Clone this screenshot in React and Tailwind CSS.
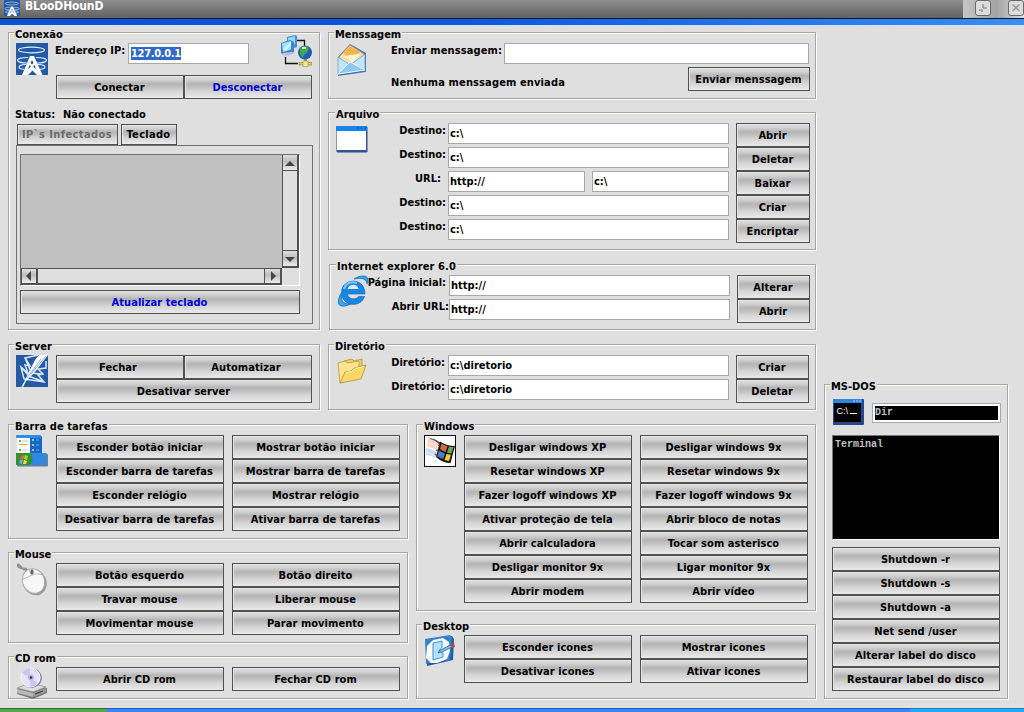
import React from "react";

function Group({ title, className = "", titleClass = "ml-[5px]", children }) {
  return (
    <section
      className={
        "box-border border border-[#a6a69f] shadow-[inset_1px_1px_0_#fff,1px_1px_0_#fff] " + className
      }
    >
      <h2 className={"-mt-[5px] h-[12px] w-fit bg-[#dfdfdf] px-px leading-[13px] " + titleClass}>{title}</h2>
      {children}
    </section>
  );
}

function Btn({ className = "w-[168px]", children }) {
  return (
    <button
      className={
        "box-border flex h-[24px] shrink-0 items-center justify-center border border-[#505050] bg-[linear-gradient(to_bottom,#dedede_0%,#d2d2d2_16%,#b4b4b4_36%,#bcbcbc_46%,#d2d2d2_66%,#eaeaea_100%)] pr-px leading-[13px] tracking-[0.06px] whitespace-nowrap shadow-[inset_1px_1px_0_#e6e6e6] " +
        className
      }
    >
      {children}
    </button>
  );
}

function Field({ className = "w-[281px]", children }) {
  return (
    <div
      className={
        "box-border flex h-[21px] shrink-0 items-center border border-[#a8a8a8] bg-white pl-[1px] leading-[13px] whitespace-nowrap " +
        className
      }
    >
      {children}
    </div>
  );
}

function Pairs({ rows }) {
  return (
    <div className="grid grid-cols-[168px_168px] gap-x-2">
      {rows.map(([a, b]) => (
        <React.Fragment key={a}>
          <Btn>{a}</Btn>
          <Btn>{b}</Btn>
        </React.Fragment>
      ))}
    </div>
  );
}

function IconRow({ icon, children }) {
  return (
    <div className="flex gap-2 pt-[3px] pl-[7px]">
      <div className="h-8 w-8 shrink-0">{icon}</div>
      {children}
    </div>
  );
}

function Label({ className = "", children }) {
  return <span className={"leading-[13px] whitespace-nowrap " + className}>{children}</span>;
}

function FieldRow({ label, children, labelClass = "w-[71px] pr-[2px]" }) {
  return (
    <div className="flex h-[24px]">
      <Label className={"flex shrink-0 justify-end pt-px " + labelClass}>{label}</Label>
      {children}
    </div>
  );
}

const Tower = ({ s = 32 }) => (
  <svg width={s} height={s} viewBox="0 0 32 32" className="block">
    <rect width="32" height="32" fill="#245aa5" />
    <g fill="none" stroke="#dceaff" strokeWidth="1.2">
      <ellipse cx="15.5" cy="7" rx="13" ry="2.8" />
      <path d="M12 14.500C5 14.500 1 16 1.500 17.500S7 20 11 20M20 14.500c7 0 11 1.500 10.500 3S25 20 21 20M10 21.500c-5 0-7 1.500-7 2.500s2 2 5 2.300M22 21.500c5 0 7 1.500 7 2.500s-2 2-5 2.300" />
    </g>
    <path d="M14 13h4l8.500 19h-5.500l-4.500-4.500L12 32H6z" fill="#fff" />
    <path d="M16 17l1.500 3-1.500 1.500-1.500-1.500zM13.500 22l1.500 1.500-3 3zM18.500 22l-1.500 1.500 3 3z" fill="#245aa5" />
  </svg>
);

const Network = () => (
  <svg width="32" height="32" viewBox="0 0 32 32" className="block">
    <path d="M17 5.500h7.500V11M5.500 22v6.500H18" fill="none" stroke="#111" strokeWidth="1.300" />
    <path d="M7 2l8-2 2 1v11l-8 3-2-1z" fill="#4a8ad6" />
    <path d="M8 3l7-2v8l-7 3z" fill="#8ddcfb" />
    <path d="M1 8l9-3 4 2v10l-9 3-4-2z" fill="#4680cf" />
    <path d="M2 8.500l9-2.500v8.500L3 17z" fill="#9fe6ff" />
    <path d="M3 14l8-7v3l-6 6z" fill="#d2f5ff" />
    <path d="M3 18l8-1 4 1-7 3-6-1z" fill="#b9c2e2" />
    <circle cx="25" cy="17.500" r="7" fill="#2459bd" />
    <path d="M20 13q3-3 7-2l2 3-2 4-3 2-1 3-3-4z" fill="#3cab45" />
    <path d="M22 13l4 0" stroke="#b7f3c6" strokeWidth="2" />
    <path d="M24 24h3v3h-3z" fill="#8f8d55" />
    <path d="M19 27.500h13v2.500H19z" fill="#d9cc6a" stroke="#857c45" strokeWidth=".6" />
    <path d="M23 26h5v5.500h-5z" fill="#f5e88e" stroke="#a3934b" strokeWidth=".6" />
  </svg>
);

const Mail = () => (
  <svg width="32" height="34" viewBox="0 0 32 34" className="block">
    <path d="M2 14L14 1l16 9v19L2 33z" fill="#4876b4" />
    <path d="M3 14L14 2l14 9-4 13H6z" fill="#f7dfa8" stroke="#b29164" strokeWidth=".7" />
    <path d="M8 9l6-6 10 6-3 3-12 1z" fill="#f9b647" />
    <path d="M7 13l17-2-7 8z" fill="#fff5df" />
    <path d="M2 14l12 8 15-11v16L2 31z" fill="#c0e5fb" stroke="#6b95c6" strokeWidth=".7" />
    <path d="M2 31l12-12 15 8z" fill="#8fc7f2" stroke="#e7f8ff" />
  </svg>
);

const AppWindow = () => (
  <svg width="32" height="27" viewBox="0 0 32 27" className="block">
    <rect x=".5" y=".5" width="31" height="26" rx="1" fill="#33558f" />
    <rect width="31" height="5" fill="#1684ee" />
    <path d="M21 2h2M24.500 2h2M28 2h2" stroke="#0c50a8" />
    <rect x="1" y="5" width="29" height="19" fill="#fff" />
  </svg>
);

const Explorer = () => (
  <svg width="32" height="32" viewBox="0 0 32 32" className="block">
    <path d="M28 19H10.500c1 6 9 6 11 2.500h6C24 33 5 32 4.500 18 4 3 28 1 28 19z" fill="#1686e1" stroke="#0d60ba" strokeWidth=".6" />
    <path d="M10.500 14h11c-1-6-10-5-11 0z" fill="#dfeaf5" />
    <path d="M7 14c2-6 7-8 13-6" fill="none" stroke="#75d0ff" strokeWidth="2" />
    <path d="M17 4c9-5 16-4 13 5 0-5-4-7-13-5zM5 17c-6 10-5 18 9 12-8 1-11-2-9-12z" fill="#3aa8f2" stroke="#2583cc" strokeWidth="1.200" />
  </svg>
);

const Folder = () => (
  <svg width="32" height="28" viewBox="0 0 32 28" className="block">
    <path d="M8 4l8-2 2 2 8-2v16H9z" fill="#f3ce5c" stroke="#aa8d3c" strokeWidth=".8" />
    <path d="M2 6l7-2 3 2 11-2v16L4 26z" fill="#ffe58d" stroke="#b69745" strokeWidth=".8" />
    <path d="M4 26l5-11 6-1 3-3 12-3-5 14z" fill="#fbd764" stroke="#b3923e" strokeWidth=".8" />
    <path d="M10 15.500l6-1 3-3 9-2" fill="none" stroke="#fff6bf" />
  </svg>
);

const ServerIcon = () => (
  <svg width="32" height="32" viewBox="0 0 32 32" className="block">
    <rect width="32" height="32" fill="#245aa5" />
    <path d="M22 0L9 3l5 8-5-1 3 8-7-6 3 12M9 3l6 14M5 12l8 9M8 24l20 3-6-7 5-1-5-5 8-1 0-7M12 21l14 5M14 18l12 1" fill="none" stroke="#d9e8ff" strokeWidth="1.500" />
    <path d="M5.500 32L10 23 19 5l4-5h9L19 17l-9 9-3 6z" fill="#fff" />
    <path d="M11 23L25 4M15 19L30 1" stroke="#7f9fd0" strokeWidth=".9" />
  </svg>
);

const Taskbar = () => (
  <svg width="32" height="32" viewBox="0 0 32 32" className="block">
    <rect x="1" y="1" width="25" height="18" rx="1" fill="#1767c5" />
    <rect x="0" y="0" width="25" height="3" rx="1" fill="#2f8be8" />
    <rect x="1" y="3" width="13" height="15" fill="#fff" />
    <path d="M3 5h2v2H3zM3 14h2v2H3z" fill="#67a844" />
    <path d="M3 9h9v1H3z" fill="#efb334" />
    <path d="M6 6h6M6 15h5" stroke="#b8c6dd" />
    <path d="M16 5h2M16 10h2M16 15h2" stroke="#8ec8ff" strokeWidth="2" />
    <path d="M20 5h3M20 10h3M20 15h3" stroke="#69aef4" />
    <rect x="1" y="19" width="31" height="12.500" rx="1" fill="#6a7f98" />
    <rect y="18" width="30.500" height="12" fill="#3188de" />
    <path d="M0 18h14q5 6 0 12H0z" fill="#34912e" />
    <path d="M5 21l3-1v4l-4 1z" fill="#e9623b" />
    <path d="M9 20l3 1-1 4-3-1z" fill="#9ddb44" />
    <path d="M4 25l3 0-1 4-3-1z" fill="#67abf1" />
    <path d="M8 25l3 1-1 3-3 0z" fill="#f5da4b" />
  </svg>
);

const MouseIcon = () => (
  <svg width="32" height="34" viewBox="0 0 32 34" className="block">
    <path d="M15 8C11 6 8 8 6 5S1 0 2 3s5 2 9 3" fill="none" stroke="#8e8e8e" strokeWidth="2" />
    <ellipse cx="19" cy="19.500" rx="11.500" ry="13" transform="rotate(-24 19 19.500)" fill="#999" />
    <ellipse cx="17.500" cy="18" rx="11" ry="12.500" transform="rotate(-24 17.500 18)" fill="#f7f7f7" stroke="#aaa" />
    <path d="M7 16c4-1 6-3 9-4 4-2 8-1 10 0M15 11l-2-4" fill="none" stroke="#b8b8b8" />
    <ellipse cx="16" cy="9" rx="1.600" ry="2.800" fill="#596096" />
  </svg>
);

const Disc = () => (
  <svg width="32" height="32" viewBox="0 0 32 32" className="block">
    <path d="M1 22l13-5 17 4v5l-14 6-16-5z" fill="#777" />
    <path d="M1 21l13-5 16 4-13 5z" fill="#dedede" stroke="#888" strokeWidth=".7" />
    <path d="M1 22l16 4v4L1 26z" fill="#b8b8b8" />
    <path d="M17 26l13-5v4l-13 5z" fill="#999" />
    <path d="M19 27l8-3" stroke="#333" />
    <ellipse cx="15.500" cy="11" rx="10.500" ry="10" fill="#8989a8" />
    <circle cx="14.500" cy="10.500" r="9.500" fill="#e4e1fa" stroke="#fafaff" />
    <path d="M14 10L6 6q3-5 8-5zM15 11l7 6q-4 3-8 3z" fill="#cbc6f1" />
    <circle cx="15" cy="10.500" r="3" fill="#b7b6df" />
    <circle cx="15" cy="10.500" r="1.300" fill="#353553" />
  </svg>
);

const WindowsFlag = () => (
  <svg width="32" height="32" viewBox="0 0 32 32" className="block">
    <rect x=".5" y=".5" width="31" height="31" fill="#fff" stroke="#111" />
    <path d="M4 2q7 1 13 6l-3 9q-5-5-11-5z" fill="#f8d5c6" />
    <path d="M2 13q7 1 12 5l-2 5q-5-3-10-3z" fill="#ccd9f2" />
    <path d="M6 3q6 1 11 5l-1 2Q11 5 6 4z" fill="#555" />
    <path d="M16 6.500q7 4.500 15 4.500l-4.500 17q-8 0-14.500-6z" fill="#161616" />
    <path d="M17.500 8.500q3 2 6 2.500l-2 6q-3-1-5.500-3z" fill="#d3693f" />
    <path d="M25 11.500q2 .6 4.500.6l-2 6.300q-2.500 0-4.500-1z" fill="#67a84a" />
    <path d="M15 15.500q3 2 6 3l-2 5.500q-3-1-5.500-3z" fill="#4b80c9" />
    <path d="M22.500 19q2.500.8 4.500.8L25 26q-2.500-.3-4.500-1z" fill="#f5cd36" />
    <path d="M5 8l9 4M4 12l9 4M3 17l8 4" stroke="#fff" strokeDasharray="2 1" />
    <path d="M11 19l3 3M12 15l2 1M14 10l2 1" stroke="#555" strokeWidth="1.200" />
  </svg>
);

const DesktopIcon = () => (
  <svg width="32" height="32" viewBox="0 0 32 32" className="block">
    <path d="M2 5l26-4 2 3-1 21L3 31z" fill="#1f5d9f" />
    <path d="M1 4l25-4 2 2-2 23L2 29z" fill="#3681cb" />
    <path d="M9 5l10-2 6 4 1 9-3 8-10 4H7l-5-5 1-12z" fill="#f7fbf6" />
    <path d="M9 8l9-2v6l-3 4 4 2v4l-10 3z" fill="#b7e0fb" stroke="#3a93dc" />
    <path d="M15 16l11-6 2 2-10 5-4 1z" fill="#7ebce9" stroke="#286ba7" strokeWidth=".8" />
    <path d="M27 9l3-1 1 4-3 1z" fill="#c94435" />
  </svg>
);

const DosIcon = () => (
  <svg width="31" height="26" viewBox="0 0 31 26" className="block">
    <rect width="31" height="26" rx="1" fill="#28488d" />
    <rect width="29" height="4" fill="#2f86df" />
    <path d="M20 2h2M23 2h2M26 2h2" stroke="#9cd0ff" />
    <rect x="1" y="4" width="27" height="19" fill="#000" />
    <text x="3.500" y="15" fill="#fff" fontFamily="Liberation Sans" fontSize="9" fontWeight="400">C:\</text>
    <path d="M17 14.500h7" stroke="#fff" />
  </svg>
);

function Arrow({ d, className = "" }) {
  return (
    <div
      className={
        "box-border flex h-4 w-4 items-center justify-center border border-[#505050] bg-[linear-gradient(to_bottom,#dedede,#bdbdbd_45%,#ececec)] " +
        className
      }
    >
      <svg width="10" height="10" viewBox="0 0 10 10">
        <path d={d} fill="#444" />
      </svg>
    </div>
  );
}

function Keyboard() {
  return (
    <div className="mt-px ml-[7px] box-border h-[179px] w-[297px] border border-[#707070] pt-[8px] pl-[3px]">
      <div className="box-border flex h-[132px] w-[280px] flex-col border-t border-r border-b border-l border-t-[#707070] border-r-white border-b-white border-l-[#707070]">
        <div className="flex h-[113px]">
          <div className="w-[261px] bg-[#c0c0c0]" />
          <div className="box-border flex w-[17px] flex-col justify-between border-r-2 border-b-2 border-l border-[#505050]">
            <Arrow d="M5 3L10 8H0z" className="w-full border-x-0 border-t-0" />
            <Arrow d="M0 3h10L5 8z" className="w-full border-x-0 border-b-0" />
          </div>
        </div>
        <div className="box-border flex h-[17px] w-[261px] justify-between border-t border-r-2 border-b-2 border-l border-[#505050]">
          <Arrow d="M7 0v10L2 5z" className="h-full border-y-0 border-r-2 border-l-0" />
          <Arrow d="M3 0v10l5-5z" className="h-full border-y-0 border-r-0" />
        </div>
      </div>
      <Btn className="mt-[4px] w-[280px] text-[#0000d8]">Atualizar teclado</Btn>
    </div>
  );
}

export default function App() {
  return (
    <div className="flex h-[712px] w-[1024px] flex-col overflow-hidden bg-[#dfdfdf] font-['DejaVu_Sans_Condensed','DejaVu_Sans',sans-serif] text-[11px] font-bold text-black [font-stretch:condensed]">
      <header className="flex h-[18px] shrink-0 justify-between bg-[linear-gradient(to_bottom,#8d8d8d,#626262)]">
        <div className="flex pl-[4px]">
          <Tower s={16} />
          <span className="ml-[5px] text-[12px] leading-[13px] font-bold tracking-[-0.15px] text-white">BLooDHounD</span>
        </div>
        <div className="flex w-[61px] justify-between bg-[linear-gradient(to_right,#c5c5c5,#a3a3a3_55%,#dedede)] pl-[12px]">
          {["M8 4v4M8 8h4M4 10h3v2", "M4.500 4.500l7 6.500M11.500 4.500l-7 6.500"].map((d) => (
            <svg key={d} width="16" height="16" viewBox="0 0 16 16" className="block">
              <rect x=".5" y=".5" width="15" height="15" rx="2.500" fill="#dcdcdc" stroke="#686868" />
              <path d={d} fill="none" stroke="#989898" strokeWidth="1.600" />
            </svg>
          ))}
        </div>
      </header>
      <div className="h-[7px] shrink-0 border-t border-[#10182b] bg-[linear-gradient(to_right,#0b54d2,#0b58dc_45%,#3b8df8)]" />
      <div className="h-px shrink-0 bg-[#cfe6f2]" />

      <main className="flex h-[682px] shrink-0 gap-2 pt-[6px] pl-2">
        <div className="flex w-[808px] shrink-0 flex-col gap-[14px]">
          <div className="flex h-[378px] gap-2">
            <div className="flex w-[312px] flex-col gap-[14px]">
              <Group title="Conexão" className="h-[298px]">
                <div className="flex h-[59px] gap-2 pl-[7px]">
                  <div className="pt-[3px]">
                    <Tower />
                  </div>
                  <div className="flex w-[256px] flex-col">
                    <div className="flex h-[35px] items-start">
                      <Label className="-ml-px w-[73px] pt-[4px]">Endereço IP:</Label>
                      <Field className="mt-[3px] w-[121px]">
                        <span className="ml-px bg-[#316ac5] tracking-[-0.3px] text-white">127.0.0.1</span>
                      </Field>
                      <div className="-mt-[5px] ml-[31px]">
                        <Network />
                      </div>
                    </div>
                    <div className="flex">
                      <Btn className="w-[128px]">Conectar</Btn>
                      <Btn className="w-[128px] text-[#0000d8]">Desconectar</Btn>
                    </div>
                  </div>
                </div>
                <div className="flex h-[25px] pt-[9px] pl-[6px]">
                  <Label className="w-[48px]">Status:</Label>
                  <Label>Não conectado</Label>
                </div>
                <div className="flex h-[20px] gap-[3px] pl-[8px]">
                  <Btn className="h-[21px]! w-[101px] tracking-[0.4px]! text-[#6b6b6b]">IP`s Infectados</Btn>
                  <Btn className="h-[21px]! w-[56px] tracking-[0.3px]!">Teclado</Btn>
                </div>
                <Keyboard />
              </Group>
              <Group title="Server" className="h-[66px]">
                <IconRow icon={<ServerIcon />}>
                  <div className="flex w-[256px] flex-wrap">
                    <Btn className="w-[128px] pr-[4px]!">Fechar</Btn>
                    <Btn className="w-[128px] pr-[4px]!">Automatizar</Btn>
                    <Btn className="w-[256px]">Desativar server</Btn>
                  </div>
                </IconRow>
              </Group>
            </div>

            <div className="flex w-[488px] flex-col">
              <Group title="Menssagem" className="h-[67px]">
                <div className="flex pt-[3px] pl-[7px]">
                  <Mail />
                  <div className="ml-[23px] flex w-[419px] flex-col">
                    <div className="flex h-[24px]">
                      <Label className="w-[113px] pt-px tracking-[0.1px]">Enviar menssagem:</Label>
                      <Field className="w-[305px]" />
                    </div>
                    <div className="flex justify-between">
                      <Label className="pt-[9px] tracking-[0.13px]">Nenhuma menssagem enviada</Label>
                      <Btn className="w-[122px]">Enviar menssagem</Btn>
                    </div>
                  </div>
                </div>
              </Group>
              <Group title="Arquivo" titleClass="ml-[6px]" className="mt-[13px] h-[138px]">
                <div className="flex pt-[3px] pl-[7px]">
                  <div className="mt-[3px] w-[32px]">
                    <AppWindow />
                  </div>
                  <div className="ml-[9px] w-[360px]">
                    <FieldRow label="Destino:"><Field>c:\</Field></FieldRow>
                    <FieldRow label="Destino:"><Field>c:\</Field></FieldRow>
                    <FieldRow label="URL:" labelClass="w-[71px] pr-[7px]">
                      <Field className="w-[137px]">http://</Field>
                      <Field className="ml-[7px] w-[137px]">c:\</Field>
                    </FieldRow>
                    <FieldRow label="Destino:"><Field>c:\</Field></FieldRow>
                    <FieldRow label="Destino:"><Field>c:\</Field></FieldRow>
                  </div>
                  <div className="-ml-px">
                    {["Abrir", "Deletar", "Baixar", "Criar", "Encriptar"].map((t) => (
                      <Btn key={t} className="w-[74px]">{t}</Btn>
                    ))}
                  </div>
                </div>
              </Group>
              <Group title="Internet explorer 6.0" titleClass="ml-[6px] tracking-[0.1px]" className="mt-[14px] ml-px h-[66px]">
                <div className="flex pt-[3px] pl-[7px]">
                  <div className="-mr-[3px] w-[32px]">
                    <Explorer />
                  </div>
                  <div className="w-[371px]">
                    <FieldRow label="Página inicial:" labelClass="w-[83px] pr-[3px]"><Field>http://</Field></FieldRow>
                    <FieldRow label="Abrir URL:" labelClass="w-[83px]"><Field>http://</Field></FieldRow>
                  </div>
                  <div>
                    <Btn className="w-[73px]">Alterar</Btn>
                    <Btn className="w-[73px]">Abrir</Btn>
                  </div>
                </div>
              </Group>
              <Group title="Diretório" className="mt-[14px] h-[66px]">
                <div className="flex pt-[3px] pl-[7px]">
                  <div className="mt-[2px] w-[32px]">
                    <Folder />
                  </div>
                  <div className="ml-[9px] w-[359px]">
                    <FieldRow label="Diretório:" labelClass="w-[71px] pr-[3px]"><Field>c:\diretorio</Field></FieldRow>
                    <FieldRow label="Diretório:" labelClass="w-[71px] pr-[3px]"><Field>c:\diretorio</Field></FieldRow>
                  </div>
                  <div>
                    <Btn className="w-[73px]">Criar</Btn>
                    <Btn className="w-[73px]">Deletar</Btn>
                  </div>
                </div>
              </Group>
            </div>
          </div>

          <div className="flex gap-2">
            <div className="flex w-[400px] flex-col">
              <Group title="Barra de tarefas" titleClass="ml-[5px] tracking-[0.1px]" className="h-[115px]">
                <IconRow icon={<Taskbar />}>
                  <Pairs
                    rows={[
                      ["Esconder botão iniciar", "Mostrar botão iniciar"],
                      ["Esconder barra de tarefas", "Mostrar barra de tarefas"],
                      ["Esconder relógio", "Mostrar relógio"],
                      ["Desativar barra de tarefas", "Ativar barra de tarefas"],
                    ]}
                  />
                </IconRow>
              </Group>
              <Group title="Mouse" className="mt-[13px] h-[91px]">
                <IconRow icon={<MouseIcon />}>
                  <Pairs
                    rows={[
                      ["Botão esquerdo", "Botão direito"],
                      ["Travar mouse", "Liberar mouse"],
                      ["Movimentar mouse", "Parar movimento"],
                    ]}
                  />
                </IconRow>
              </Group>
              <Group title="CD rom" className="mt-[13px] h-[43px]">
                <IconRow icon={<Disc />}>
                  <Pairs rows={[["Abrir CD rom", "Fechar CD rom"]]} />
                </IconRow>
              </Group>
            </div>
            <div className="flex w-[400px] flex-col">
              <Group title="Windows" titleClass="ml-[6px]" className="h-[187px]">
                <IconRow icon={<WindowsFlag />}>
                  <Pairs
                    rows={[
                      ["Desligar windows XP", "Desligar windows 9x"],
                      ["Resetar windows XP", "Resetar windows 9x"],
                      ["Fazer logoff windows XP", "Fazer logoff windows 9x"],
                      ["Ativar proteção de tela", "Abrir bloco de notas"],
                      ["Abrir calculadora", "Tocar som asterisco"],
                      ["Desligar monitor 9x", "Ligar monitor 9x"],
                      ["Abrir modem", "Abrir vídeo"],
                    ]}
                  />
                </IconRow>
              </Group>
              <Group title="Desktop" className="mt-[13px] h-[75px]">
                <IconRow icon={<DesktopIcon />}>
                  <Pairs
                    rows={[
                      ["Esconder icones", "Mostrar icones"],
                      ["Desativar icones", "Ativar icones"],
                    ]}
                  />
                </IconRow>
              </Group>
            </div>
          </div>
        </div>

        <Group title="MS-DOS" className="mt-[352px] h-[315px] w-[184px]">
          <div className="pl-[7px]">
            <div className="flex h-[43px] gap-[8px] pt-[7px] pl-px">
              <DosIcon />
              <div className="mt-[4px] box-border h-[20px] w-[129px] border border-[#a8a8a8] bg-white p-[2px]">
                <div className="h-[14px] bg-black font-['Liberation_Mono',monospace] text-[10px] leading-[13px] text-[#c0c0c0]">
                  Dir
                </div>
              </div>
            </div>
            <div className="box-border h-[105px] w-[168px] border border-t-[#777] border-r-white border-b-white border-l-[#777] bg-black pt-[1px] pl-[2px] font-['Liberation_Mono',monospace] text-[10px] leading-[15px] text-[#c0c0c0]">
              Terminal
            </div>
            <div className="mt-[7px]">
              {["Shutdown -r", "Shutdown -s", "Shutdown -a", "Net send /user", "Alterar label do disco", "Restaurar label do disco"].map((t) => (
                <Btn key={t}>{t}</Btn>
              ))}
            </div>
          </div>
        </Group>
      </main>

      <footer className="flex h-[4px] shrink-0">
        <div className="w-[107px] border-t border-[#257025] bg-[#55a653]" />
        <div className="w-[803px] border-t border-[#1f62c7] bg-[#3a88ee]" />
        <div className="grow border-t border-[#1682c8] bg-[#2ba5f2]" />
      </footer>
    </div>
  );
}
